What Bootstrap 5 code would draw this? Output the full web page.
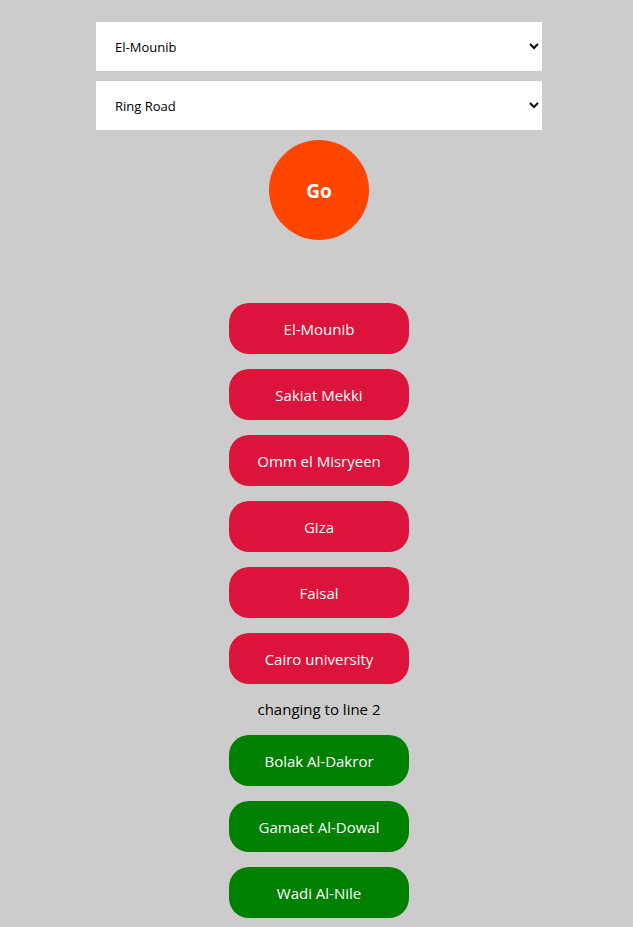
<!DOCTYPE html>
<html lang="en">
<head>
<meta charset="utf-8">
<meta name="viewport" content="width=device-width, initial-scale=1">
<title>Metro route</title>
<link href="https://cdn.jsdelivr.net/npm/bootstrap@5.3.0/dist/css/bootstrap.min.css" rel="stylesheet">
<style>
body { background: #ccc; color: #000; font-family: "Open Sans", "Noto Sans", sans-serif; }
.planner { width: 71.25%; padding: 22px 0 9px 5px; }
.trip-form { gap: 10px; }
.station-select { height: 49px; padding: 0 0 0 15px; border: 0; border-radius: 0; background: #fff; color: #000; font-size: 13px; }
.go-btn { width: 100px; height: 100px; padding: 2px 0 0; border: 0; border-radius: 50%; background: #ff4500; color: #fff; font-size: 19px; font-weight: 700; }
.route { gap: 15px; margin-top: 63px; font-size: 15px; line-height: 21px; }
.stop { width: 180px; height: 51px; padding-top: 1px; border-radius: 20px; color: #fff; }
.line-one { background: #dc143c; }
.line-two { background: green; }
</style>
</head>
<body>
<main class="planner mx-auto d-flex flex-column align-items-center">
<form class="trip-form w-100 d-flex flex-column align-items-center">
<select id="from" aria-label="From" class="station-select w-100"><option>El-Mounib</option></select>
<select id="to" aria-label="To" class="station-select w-100"><option>Ring Road</option></select>
<button type="button" class="go-btn">Go</button>
</form>
<section class="route d-flex flex-column align-items-center" aria-label="Route">
<div class="stop line-one d-flex align-items-center justify-content-center">El-Mounib</div>
<div class="stop line-one d-flex align-items-center justify-content-center">Sakiat Mekki</div>
<div class="stop line-one d-flex align-items-center justify-content-center">Omm el Misryeen</div>
<div class="stop line-one d-flex align-items-center justify-content-center">Giza</div>
<div class="stop line-one d-flex align-items-center justify-content-center">Faisal</div>
<div class="stop line-one d-flex align-items-center justify-content-center">Cairo university</div>
<div>changing to line 2</div>
<div class="stop line-two d-flex align-items-center justify-content-center">Bolak Al-Dakror</div>
<div class="stop line-two d-flex align-items-center justify-content-center">Gamaet Al-Dowal</div>
<div class="stop line-two d-flex align-items-center justify-content-center">Wadi Al-Nile</div>
</section>
</main>
<script src="https://cdn.jsdelivr.net/npm/bootstrap@5.3.0/dist/js/bootstrap.bundle.min.js"></script>
</body>
</html>
